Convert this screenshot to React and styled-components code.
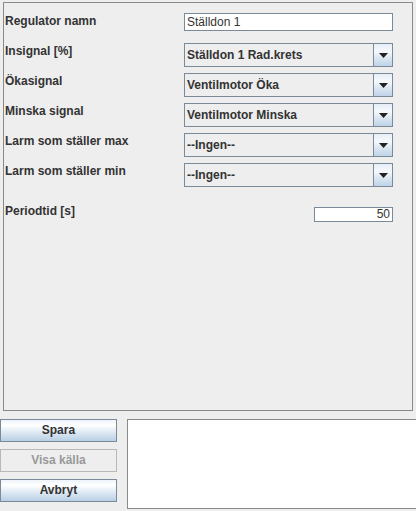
import styled, { createGlobalStyle } from 'styled-components';

const GlobalStyle = createGlobalStyle`
  html, body {
    margin: 0;
    padding: 0;
    background: #eeeeee;
    overflow: hidden;
  }
  body {
    font-family: "Liberation Sans", Arial, sans-serif;
    font-size: 12px;
    color: #333333;
  }
`;

const Window = styled.div`
  width: 416px;
  height: 511px;
  display: flex;
  flex-direction: column;
`;

const Panel = styled.div`
  margin: 2px 0 0 3px;
  width: 408px;
  height: 397px;
  border: 1px solid #8a8a8a;
  box-sizing: content-box;
  padding-top: 10px;
  display: flex;
  flex-direction: column;
`;

const Row = styled.div`
  display: grid;
  grid-template-columns: 180px 209px;
  align-items: start;
  margin-top: ${p => p.$gap || 0}px;
`;

const Label = styled.div`
  font-weight: bold;
  font-size: 12px;
  line-height: 14px;
  color: #333333;
  padding-left: 1px;
  margin-top: ${p => p.$offset || 0}px;
  white-space: nowrap;
`;

const Field = styled.div`
  height: ${p => p.$h}px;
  box-sizing: border-box;
  border: 1px solid #7a8a99;
  background: #ffffff;
  font-size: 12px;
  line-height: ${p => p.$h - 2}px;
  padding: 0 2px;
  text-align: ${p => (p.$right ? 'right' : 'left')};
  color: #333333;
  justify-self: ${p => (p.$narrow ? 'end' : 'stretch')};
  width: ${p => (p.$narrow ? '79px' : 'auto')};
`;

const Combo = styled.div`
  height: 24px;
  box-sizing: border-box;
  border: 1px solid #7a8a99;
  background: #eeeeee;
  display: flex;
`;

const ComboText = styled.div`
  flex: 1;
  font-weight: bold;
  line-height: 22px;
  padding-left: 2px;
  color: #333333;
`;

const ArrowButton = styled.div`
  width: 18px;
  border-left: 1px solid #7a8a99;
  background: linear-gradient(#e6eef7, #f6f9fc 35%, #dde8f3 60%, #bfd3e8);
  display: flex;
  align-items: center;
  justify-content: center;
`;

const Bottom = styled.div`
  display: flex;
  padding-top: 8px;
  gap: 10px;
`;

const Buttons = styled.div`
  display: flex;
  flex-direction: column;
  gap: 7px;
  width: 118px;
`;

const Button = styled.div`
  height: 23px;
  box-sizing: border-box;
  border: 1px solid ${p => (p.$disabled ? '#b8b8b8' : '#7a8a99')};
  background: ${p =>
    p.$disabled
      ? '#eeeeee'
      : 'linear-gradient(#eef4fa, #ffffff 25%, #dde8f3 60%, #b8cfe5)'};
  color: ${p => (p.$disabled ? '#999999' : '#333333')};
  font-weight: bold;
  text-align: center;
  line-height: 21px;
`;

const Output = styled.div`
  width: 292px;
  height: 90px;
  box-sizing: border-box;
  border: 1px solid #8a8a8a;
  border-right: none;
  background: #ffffff;
`;

const Arrow = () => (
  <svg width="9" height="5" viewBox="0 0 9 5">
    <polygon points="0,0 9,0 4.5,5" fill="#222222" />
  </svg>
);

const Select = ({ value }) => (
  <Combo>
    <ComboText>{value}</ComboText>
    <ArrowButton>
      <Arrow />
    </ArrowButton>
  </Combo>
);

export default function App() {
  const combos = [
    ['Insignal [%]', 'Ställdon 1 Rad.krets'],
    ['Ökasignal', 'Ventilmotor Öka'],
    ['Minska signal', 'Ventilmotor Minska'],
    ['Larm som ställer max', '--Ingen--'],
    ['Larm som ställer min', '--Ingen--'],
  ];
  return (
    <>
      <GlobalStyle />
      <Window>
        <Panel>
          <Row>
            <Label $offset={1}>Regulator namn</Label>
            <Field $h={18}>Ställdon 1</Field>
          </Row>
          {combos.map(([label, value], i) => (
            <Row key={label} $gap={i === 0 ? 12 : 6}>
              <Label $offset={1}>{label}</Label>
              <Select value={value} />
            </Row>
          ))}
          <Row $gap={20}>
            <Label $offset={-3}>Periodtid [s]</Label>
            <Field $h={15} $right $narrow>50</Field>
          </Row>
        </Panel>
        <Bottom>
          <Buttons>
            <Button>Spara</Button>
            <Button $disabled>Visa källa</Button>
            <Button>Avbryt</Button>
          </Buttons>
          <Output />
        </Bottom>
      </Window>
    </>
  );
}
